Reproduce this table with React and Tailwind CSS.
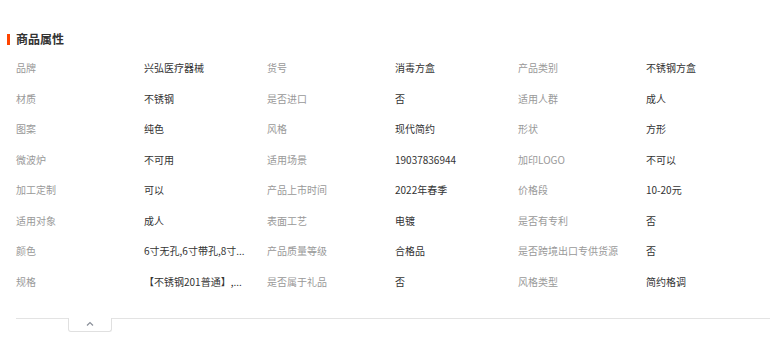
import React from 'react';

const rows = [
    [['品牌', '兴弘医疗器械'], ['货号', '消毒方盒'], ['产品类别', '不锈钢方盒']],
    [['材质', '不锈钢'], ['是否进口', '否'], ['适用人群', '成人']],
    [['图案', '纯色'], ['风格', '现代简约'], ['形状', '方形']],
    [['微波炉', '不可用'], ['适用场景', '19037836944'], ['加印LOGO', '不可以']],
    [['加工定制', '可以'], ['产品上市时间', '2022年春季'], ['价格段', '10-20元']],
    [['适用对象', '成人'], ['表面工艺', '电镀'], ['是否有专利', '否']],
    [['颜色', '6寸无孔,6寸带孔,8寸...'], ['产品质量等级', '合格品'], ['是否跨境出口专供货源', '否']],
    [['规格', '【不锈钢201普通】,...'], ['是否属于礼品', '否'], ['风格类型', '简约格调']],
];

export default function App() {
    return (
        <div className="w-[773px] h-[345px] bg-white overflow-hidden" style={{ fontFamily: '"Noto Sans CJK SC", "Noto Sans", sans-serif' }}>
            {/* Section title */}
            <div className="flex items-center h-[20px] mt-[29px] pl-[7px]">
                <span className="w-[3px] h-[11px] bg-[#ff4400]"></span>
                <span className="ml-[6px] text-[12px] leading-[20px] font-bold text-[#333]">商品属性</span>
            </div>

            {/* Attribute table */}
            <div className="mt-[4px] pl-[16px]">
                {rows.map((row, i) => (
                    <div key={i} className="flex h-[30.5px] items-center text-[10px] leading-[14px]">
                        {row.map(([label, value], j) => (
                            <div key={j} className="flex w-[251px] shrink-0">
                                <span className="w-[124px] mr-[4px] text-[#999] whitespace-nowrap">{label}</span>
                                <span className="w-[110px] text-[#333] whitespace-nowrap">{value}</span>
                            </div>
                        ))}
                    </div>
                ))}
            </div>

            {/* Collapse bar */}
            <div className="mt-[21px] ml-[16px] w-[754px] border-t border-[#e3e3e3]">
                <div className="ml-[52px] w-[44px] h-[14px] -mt-px border border-t-0 border-[#e0e0e0] rounded-b-[3px] flex justify-center pt-[3px] bg-white">
                    <svg width="8" height="5" viewBox="0 0 8 5" fill="none" stroke="#8a8f99" strokeWidth="1.2">
                        <path d="M1 4.5 L4 1.5 L7 4.5" />
                    </svg>
                </div>
            </div>
        </div>
    );
}
